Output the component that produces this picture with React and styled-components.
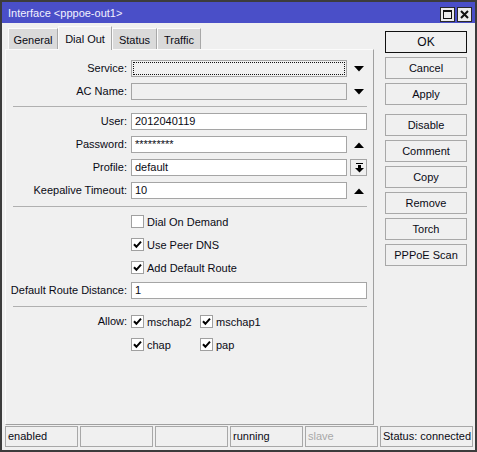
import React from "react";
import styled, { createGlobalStyle } from "styled-components";

const GlobalStyle = createGlobalStyle`
  html, body { margin: 0; padding: 0; background: #f0f0f0; }
  * { box-sizing: border-box; }
`;

const font = `"Liberation Sans", Arial, sans-serif`;

const Window = styled.div`
  width: 477px;
  height: 452px;
  display: flex;
  flex-direction: column;
  background: #f0f0f0;
  border: 2px solid #3c3c3c;
  font-family: ${font};
  font-size: 11px;
  color: #0a0a14;
`;

const TitleBar = styled.div`
  height: 21px;
  flex: none;
  display: flex;
  align-items: center;
  justify-content: space-between;
  padding: 0 3px 0 6px;
  background: #4a4fc8;
`;

const TitleText = styled.span`
  color: #f2f2ff;
  font-size: 11px;
`;

const TitleButtons = styled.div`
  display: flex;
  gap: 2px;
  margin-top: 3px;
`;

const TitleBtn = styled.div`
  width: 15px;
  height: 15px;
  display: flex;
  align-items: center;
  justify-content: center;
  background: #ececec;
  border: 1px solid #2a2a2a;
`;

const Main = styled.div`
  height: 402px;
  flex: none;
  display: flex;
  padding: 3px 0 0 3px;
`;

const LeftCol = styled.div`
  width: 369px;
  display: flex;
  flex-direction: column;
`;

const Tabs = styled.div`
  height: 23px;
  display: flex;
  align-items: flex-end;
  padding-left: 3px;
`;

const Tab = styled.div`
  width: ${(p) => p.$w}px;
  height: ${(p) => (p.$active ? 24 : 21)}px;
  margin-bottom: ${(p) => (p.$active ? -1 : 0)}px;
  display: flex;
  align-items: center;
  justify-content: center;
  padding-top: ${(p) => (p.$active ? 0 : 2)}px;
  background: ${(p) => (p.$active ? "#f0f0f0" : "#dadada")};
  border: 1px solid;
  border-bottom: none;
  border-color: #fbfbfb #a8a8a8 transparent #fbfbfb;
  position: relative;
  z-index: ${(p) => (p.$active ? 1 : 0)};
`;

const Panel = styled.div`
  flex: 1;
  display: flex;
  flex-direction: column;
  gap: 6px;
  padding: 10px 5px 0 3px;
  border: 1px solid;
  border-color: #fbfbfb #a0a0a0 #a0a0a0 #fbfbfb;
`;

const Row = styled.div`
  display: grid;
  grid-template-columns: 118px 236px;
  column-gap: 4px;
  align-items: start;
`;

const Label = styled.div`
  height: 17px;
  line-height: 17px;
  text-align: right;
  white-space: nowrap;
`;

const Field = styled.div`
  display: flex;
  gap: 3px;
  height: 17px;
`;

const Input = styled.div`
  flex: 1;
  height: 17px;
  line-height: 15px;
  padding: 0 3px;
  background: ${(p) => (p.$grey ? "#f0f0f0" : "#ffffff")};
  border: 1px solid #a5a5a5;
  outline: ${(p) => (p.$focus ? "1px dotted #111" : "none")};
  outline-offset: -3px;
  white-space: nowrap;
  overflow: hidden;
`;

const Side = styled.div`
  width: 17px;
  height: 17px;
  flex: none;
  display: flex;
  align-items: center;
  justify-content: center;
  padding-left: 1px;
  background: #f0f0f0;
  border: 1px solid ${(p) => (p.$boxed ? "#a5a5a5" : "transparent")};
`;

const Separator = styled.div`
  height: 1px;
  margin: ${(p) => p.$mt || 0}px 0 0 4px;
  width: 354px;
  background: #b0b0b0;
`;

const CheckLine = styled.div`
  height: 17px;
  display: flex;
  align-items: center;
  gap: 3px;
  white-space: nowrap;
`;

const Box = styled.div`
  width: 13px;
  height: 13px;
  flex: none;
  display: flex;
  align-items: center;
  justify-content: center;
  background: #ffffff;
  border: 1px solid #a0a0a0;
`;

const CheckGrid = styled.div`
  display: grid;
  grid-template-columns: 69px 69px;
  row-gap: 6px;
`;

const RightCol = styled.div`
  width: 82px;
  margin-left: 11px;
  padding-top: 5px;
  display: flex;
  flex-direction: column;
  gap: 4px;
`;

const Button = styled.div`
  height: 22px;
  display: flex;
  align-items: center;
  justify-content: center;
  margin-top: ${(p) => p.$mt || 0}px;
  background: #f0f0f0;
  border: 1px solid ${(p) => (p.$primary ? "#111111" : "#a8a8a8")};
  font-size: ${(p) => (p.$primary ? 12 : 11)}px;
`;

const StatusBar = styled.div`
  height: 24px;
  flex: none;
  display: flex;
  gap: 2px;
  padding: 1px 0 0 3px;
`;

const Cell = styled.div`
  width: ${(p) => p.$w}px;
  height: 21px;
  line-height: 19px;
  padding: 0 2px;
  border: 1px solid #a8a8a8;
  color: ${(p) => (p.$muted ? "#a8a8a8" : "#0a0a14")};
  white-space: nowrap;
`;

const Down = () => (
  <svg width="10" height="6" viewBox="0 0 10 6">
    <polygon points="0,0 10,0 5,5.5" fill="#000" />
  </svg>
);

const Up = () => (
  <svg width="10" height="6" viewBox="0 0 10 6">
    <polygon points="0,6 10,6 5,0.5" fill="#000" />
  </svg>
);

const DropBottom = () => (
  <svg width="9" height="10" viewBox="0 0 9 10">
    <rect x="1" y="0" width="7" height="1" fill="#000" />
    <rect x="3" y="2" width="3" height="3" fill="#000" />
    <polygon points="0,5 9,5 4.5,9.5" fill="#000" />
  </svg>
);

const Tick = () => (
  <svg width="9" height="9" viewBox="0 0 9 9">
    <path d="M1 4.2 L3.4 6.8 L8 1.6" stroke="#000" strokeWidth="2" fill="none" />
  </svg>
);

const Check = ({ on, children }) => (
  <CheckLine>
    <Box>{on && <Tick />}</Box>
    <span>{children}</span>
  </CheckLine>
);

const TextRow = ({ label, value, side, boxed, grey, focus }) => (
  <Row>
    <Label>{label}</Label>
    <Field>
      <Input $grey={grey} $focus={focus}>{value}</Input>
      {side && <Side $boxed={boxed}>{side}</Side>}
    </Field>
  </Row>
);

export default function App() {
  return (
    <>
      <GlobalStyle />
      <Window>
        <TitleBar>
          <TitleText>Interface &lt;pppoe-out1&gt;</TitleText>
          <TitleButtons>
            <TitleBtn>
              <svg width="9" height="9" viewBox="0 0 9 9">
                <rect x="0.5" y="0.5" width="8" height="8" fill="none" stroke="#111" />
                <rect x="0" y="0" width="9" height="2" fill="#111" />
              </svg>
            </TitleBtn>
            <TitleBtn>
              <svg width="9" height="9" viewBox="0 0 9 9">
                <path d="M1 1 L8 8 M8 1 L1 8" stroke="#111" strokeWidth="2" />
              </svg>
            </TitleBtn>
          </TitleButtons>
        </TitleBar>
        <Main>
          <LeftCol>
            <Tabs>
              <Tab $w={50}>General</Tab>
              <Tab $w={54} $active>Dial Out</Tab>
              <Tab $w={45}>Status</Tab>
              <Tab $w={44}>Traffic</Tab>
            </Tabs>
            <Panel>
              <TextRow label="Service:" grey focus side={<Down />} />
              <TextRow label="AC Name:" grey side={<Down />} />
              <Separator />
              <TextRow label="User:" value="2012040119" />
              <TextRow label="Password:" value="*********" side={<Up />} />
              <TextRow label="Profile:" value="default" side={<DropBottom />} boxed />
              <TextRow label="Keepalive Timeout:" value="10" side={<Up />} />
              <Separator $mt={1} />
              <Row>
                <span />
                <Check>Dial On Demand</Check>
              </Row>
              <Row>
                <span />
                <Check on>Use Peer DNS</Check>
              </Row>
              <Row>
                <span />
                <Check on>Add Default Route</Check>
              </Row>
              <TextRow label="Default Route Distance:" value="1" />
              <Separator $mt={1} />
              <Row>
                <Label>Allow:</Label>
                <CheckGrid>
                  <Check on>mschap2</Check>
                  <Check on>mschap1</Check>
                  <Check on>chap</Check>
                  <Check on>pap</Check>
                </CheckGrid>
              </Row>
            </Panel>
          </LeftCol>
          <RightCol>
            <Button $primary>OK</Button>
            <Button>Cancel</Button>
            <Button>Apply</Button>
            <Button $mt={5}>Disable</Button>
            <Button>Comment</Button>
            <Button>Copy</Button>
            <Button>Remove</Button>
            <Button>Torch</Button>
            <Button>PPPoE Scan</Button>
          </RightCol>
        </Main>
        <StatusBar>
          <Cell $w={73}>enabled</Cell>
          <Cell $w={73} />
          <Cell $w={73} />
          <Cell $w={73}>running</Cell>
          <Cell $w={73} $muted>slave</Cell>
          <Cell $w={93}>Status: connected</Cell>
        </StatusBar>
      </Window>
    </>
  );
}
